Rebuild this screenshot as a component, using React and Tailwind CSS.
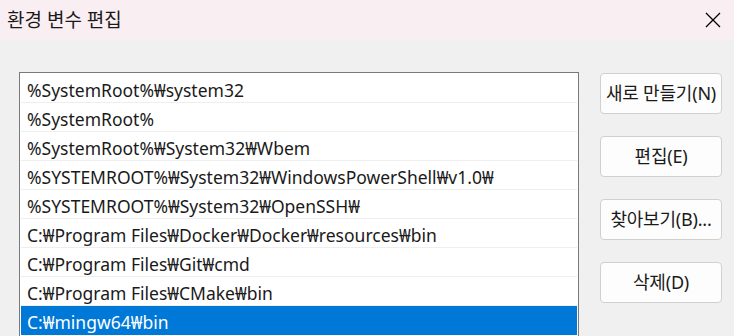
import React from "react";

const paths = [
  "%SystemRoot%₩system32",
  "%SystemRoot%",
  "%SystemRoot%₩System32₩Wbem",
  "%SYSTEMROOT%₩System32₩WindowsPowerShell₩v1.0₩",
  "%SYSTEMROOT%₩System32₩OpenSSH₩",
  "C:₩Program Files₩Docker₩Docker₩resources₩bin",
  "C:₩Program Files₩Git₩cmd",
  "C:₩Program Files₩CMake₩bin",
  "C:₩mingw64₩bin",
];

const buttons = ["새로 만들기(N)", "편집(E)", "찾아보기(B)...", "삭제(D)"];

function App() {
  return (
    <div
      className="w-[734px] h-[336px] overflow-hidden bg-[#f0f0f0] text-[#1a1a1a]"
      style={{ fontFamily: '"Noto Sans", "Noto Sans CJK KR", sans-serif' }}
    >
      <div className="h-10 bg-[#f9eef2] flex items-center justify-between pl-[7px] pr-[13px]">
        <span className="text-[19px] text-[#1a1a1a]">환경 변수 편집</span>
        <svg width="16" height="16" viewBox="0 0 16 16" className="text-black">
          <path d="M1 1 L15 15 M15 1 L1 15" stroke="currentColor" strokeWidth="1.3" />
        </svg>
      </div>

      <div className="flex pt-8 pl-[19px]">
        <div className="w-[560px] h-[300px] border border-[#7a7a7a] border-b-0 bg-white p-px">
          {paths.map((p, i) => {
            const selected = i === paths.length - 1;
            return (
              <div
                key={p}
                className={
                  selected
                    ? "h-[29px] flex items-center pl-[6px] pt-[5px] text-[17.5px] leading-none bg-[#0078d7] text-white"
                    : "h-[29px] flex items-center pl-[6px] pt-[5px] text-[17.5px] leading-none border-b border-[#eeeeee]"
                }
              >
                {p}
              </div>
            );
          })}
        </div>

        <div className="ml-[21px] pt-px flex flex-col gap-[22px]">
          {buttons.map((b) => (
            <button
              key={b}
              className="w-[122px] h-[41px] rounded-[4px] border border-[#d0d0d0] bg-[#fdfdfd] text-[18px] tracking-[-0.2px] text-[#1a1a1a] flex items-center justify-center whitespace-nowrap"
            >
              {b}
            </button>
          ))}
        </div>
      </div>
    </div>
  );
}

export default App;
